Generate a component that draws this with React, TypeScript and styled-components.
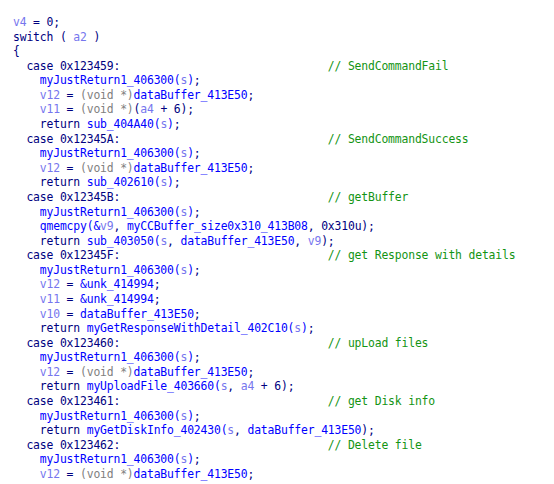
import React from "react";
import styled, { createGlobalStyle } from "styled-components";

const Global = createGlobalStyle`
  html, body { margin: 0; padding: 0; background: #ffffff; }
`;

type Kind = "k" | "f" | "v" | "c";
type Tok = [Kind, string];
type LineData = { indent: number; toks: Tok[]; comment?: string };

const colors: Record<Kind, string> = {
  k: "#000080",
  f: "#0000ff",
  v: "#7676ee",
  c: "#808080",
};

const Listing = styled.div`
  box-sizing: border-box;
  width: 554px;
  height: 484px;
  padding: 15px 0 0 13px;
  font-family: "DejaVu Sans Mono", "Liberation Mono", monospace;
  font-size: 11.4px;
  letter-spacing: -0.16px;
  line-height: 14.58px;
  white-space: pre;
  color: #000080;
  overflow: hidden;
`;

const Line = styled.div`
  height: 14.58px;
`;

const Token = styled.span<{ $kind: Kind }>`
  color: ${(p) => colors[p.$kind]};
`;

const Comment = styled.span`
  color: #149414;
`;

const COMMENT_COL = 47;

const justReturn: Tok[] = [
  ["f", "myJustReturn1_406300("],
  ["v", "s"],
  ["f", ")"],
  ["k", ";"],
];
const v12Cast: Tok[] = [
  ["v", "v12"],
  ["k", " = "],
  ["c", "(void *)"],
  ["f", "dataBuffer_413E50"],
  ["k", ";"],
];

const lines: LineData[] = [
  { indent: 0, toks: [["v", "v4"], ["k", " = 0;"]] },
  { indent: 0, toks: [["k", "switch ( "], ["v", "a2"], ["k", " )"]] },
  { indent: 0, toks: [["k", "{"]] },
  { indent: 2, toks: [["k", "case 0x123459:"]], comment: "// SendCommandFail" },
  { indent: 4, toks: justReturn },
  { indent: 4, toks: v12Cast },
  {
    indent: 4,
    toks: [["v", "v11"], ["k", " = "], ["c", "(void *)"], ["k", "("], ["v", "a4"], ["k", " + 6);"]],
  },
  { indent: 4, toks: [["k", "return "], ["f", "sub_404A40("], ["v", "s"], ["f", ")"], ["k", ";"]] },
  { indent: 2, toks: [["k", "case 0x12345A:"]], comment: "// SendCommandSuccess" },
  { indent: 4, toks: justReturn },
  { indent: 4, toks: v12Cast },
  { indent: 4, toks: [["k", "return "], ["f", "sub_402610("], ["v", "s"], ["f", ")"], ["k", ";"]] },
  { indent: 2, toks: [["k", "case 0x12345B:"]], comment: "// getBuffer" },
  { indent: 4, toks: justReturn },
  {
    indent: 4,
    toks: [
      ["f", "qmemcpy("],
      ["f", "&"],
      ["v", "v9"],
      ["k", ", "],
      ["f", "myCCBuffer_size0x310_413B08"],
      ["k", ", 0x310u);"],
    ],
  },
  {
    indent: 4,
    toks: [
      ["k", "return "],
      ["f", "sub_403050("],
      ["v", "s"],
      ["k", ", "],
      ["f", "dataBuffer_413E50"],
      ["k", ", "],
      ["v", "v9"],
      ["k", ");"],
    ],
  },
  { indent: 2, toks: [["k", "case 0x12345F:"]], comment: "// get Response with details" },
  { indent: 4, toks: justReturn },
  { indent: 4, toks: [["v", "v12"], ["k", " = "], ["f", "&unk_414994"], ["k", ";"]] },
  { indent: 4, toks: [["v", "v11"], ["k", " = "], ["f", "&unk_414994"], ["k", ";"]] },
  { indent: 4, toks: [["v", "v10"], ["k", " = "], ["f", "dataBuffer_413E50"], ["k", ";"]] },
  {
    indent: 4,
    toks: [["k", "return "], ["f", "myGetResponseWithDetail_402C10("], ["v", "s"], ["f", ")"], ["k", ";"]],
  },
  { indent: 2, toks: [["k", "case 0x123460:"]], comment: "// upLoad files" },
  { indent: 4, toks: justReturn },
  { indent: 4, toks: v12Cast },
  {
    indent: 4,
    toks: [
      ["k", "return "],
      ["f", "myUploadFile_403660("],
      ["v", "s"],
      ["k", ", "],
      ["v", "a4"],
      ["k", " + 6);"],
    ],
  },
  { indent: 2, toks: [["k", "case 0x123461:"]], comment: "// get Disk info" },
  { indent: 4, toks: justReturn },
  {
    indent: 4,
    toks: [
      ["k", "return "],
      ["f", "myGetDiskInfo_402430("],
      ["v", "s"],
      ["k", ", "],
      ["f", "dataBuffer_413E50"],
      ["k", ");"],
    ],
  },
  { indent: 2, toks: [["k", "case 0x123462:"]], comment: "// Delete file" },
  { indent: 4, toks: justReturn },
  { indent: 4, toks: v12Cast },
];

export default function App() {
  return (
    <>
      <Global />
      <Listing>
        {lines.map((ln, i) => {
          const codeLen = ln.indent + ln.toks.reduce((n, t) => n + t[1].length, 0);
          return (
            <Line key={i}>
              {" ".repeat(ln.indent)}
              {ln.toks.map((t, j) => (
                <Token key={j} $kind={t[0]}>
                  {t[1]}
                </Token>
              ))}
              {ln.comment && (
                <>
                  {" ".repeat(Math.max(1, COMMENT_COL - codeLen))}
                  <Comment>{ln.comment}</Comment>
                </>
              )}
            </Line>
          );
        })}
      </Listing>
    </>
  );
}
